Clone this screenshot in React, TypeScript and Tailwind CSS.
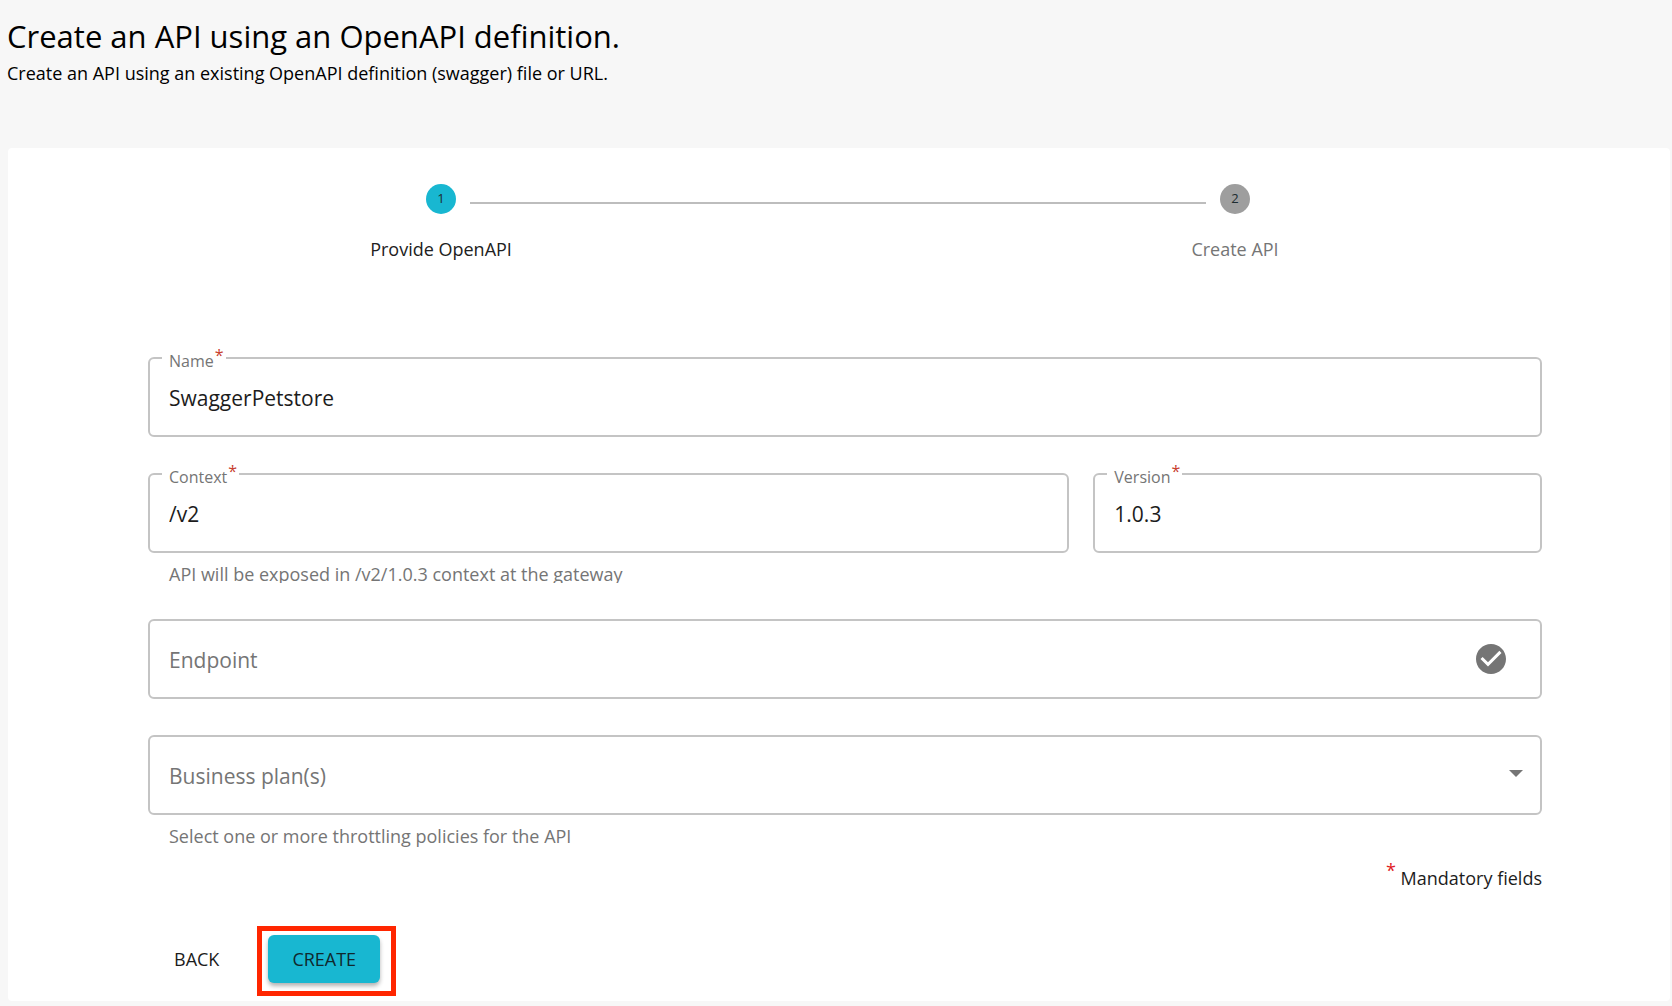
import React, { useId } from "react";

type FieldProps = {
  label: string;
  value: string;
};

function Asterisk() {
  return <span className="relative -top-1.5 ml-px text-[#c8402f]">*</span>;
}

const box =
  "block h-20 w-full rounded-md border-2 border-[#c4c4c4] bg-white px-[19px] text-[21px] outline-none";

function OutlinedField({ label, value }: FieldProps) {
  const id = useId();
  return (
    <div className="relative">
      <input id={id} required defaultValue={value} className={`${box} pt-0.5 text-[#1c1c1c]`} />
      <label
        htmlFor={id}
        className="absolute -top-2 left-3.5 bg-white pr-0.5 pl-[7px] text-base leading-6 text-[#757575]"
      >
        {label}
        <Asterisk />
      </label>
    </div>
  );
}

type StepProps = { index: number; label: string; active?: boolean };

function Step({ index, label, active }: StepProps) {
  return (
    <li className="flex flex-col items-center">
      <span
        className={`flex size-[30px] items-center justify-center rounded-full text-[13px] text-[#1c2c30] ${
          active ? "bg-[#18b7d1]" : "bg-[#9e9e9e]"
        }`}
      >
        {index}
      </span>
      <span
        className={`mt-[21px] text-lg leading-7 ${active ? "text-[#212121]" : "text-[#757575]"}`}
      >
        {label}
      </span>
    </li>
  );
}

export default function App() {
  return (
    <div className="min-h-screen bg-[#f7f7f7] pr-0.5 pb-1 pl-2 font-['Open_Sans',sans-serif] text-[#1c1c1c]">
      <header className="-ml-px h-[148px] pt-[15px] text-black">
        <h1 className="text-[31px] leading-[42px]">Create an API using an OpenAPI definition.</h1>
        <p className="text-lg leading-8">
          Create an API using an existing OpenAPI definition (swagger) file or URL.
        </p>
      </header>

      <main className="rounded-sm bg-white pt-9 pb-[5px]">
        <div className="relative mr-[38px] ml-9">
          <ol className="grid grid-cols-2">
            <Step index={1} label="Provide OpenAPI" active />
            <Step index={2} label="Create API" />
          </ol>
          <div className="absolute top-[18px] right-[calc(25%+29px)] left-[calc(25%+29px)] h-0.5 bg-[#bdbdbd]" />
        </div>

        <form
          className="mt-[94px] mr-32 ml-[140px]"
          onSubmit={(event) => event.preventDefault()}
        >
          <OutlinedField label="Name" value="SwaggerPetstore" />

          <div className="-mx-3 mt-9 flex">
            <div className="w-2/3 px-3">
              <OutlinedField label="Context" value="/v2" />
              <p className="h-[30px] overflow-hidden px-[21px] pt-[7px] text-lg leading-7 text-[#757575]">
                API will be exposed in /v2/1.0.3 context at the gateway
              </p>
            </div>
            <div className="w-1/3 px-3">
              <OutlinedField label="Version" value="1.0.3" />
            </div>
          </div>

          <div className="relative mt-9">
            <input
              aria-label="Endpoint"
              placeholder="Endpoint"
              className={`${box} pt-0.5 placeholder:text-[#757575]`}
            />
            <button
              type="button"
              aria-label="Check endpoint"
              className="absolute top-[22px] right-[33px]"
            >
              <svg viewBox="0 0 24 24" className="size-9 fill-[#757575]">
                <path d="M12 2C6.48 2 2 6.48 2 12s4.48 10 10 10 10-4.48 10-10S17.52 2 12 2zm-2 15l-5-5 1.41-1.41L10 14.17l7.59-7.59L19 8l-9 9z" />
              </svg>
            </button>
          </div>

          <div className="relative mt-9">
            <select
              aria-label="Business plan(s)"
              defaultValue=""
              className={`${box} appearance-none pt-1 text-[#757575]`}
            >
              <option value="">Business plan(s)</option>
            </select>
            <svg
              viewBox="0 0 14 7"
              className="pointer-events-none absolute top-[35px] right-[19px] h-[7px] w-3.5 fill-[#757575]"
            >
              <path d="M0 0h14L7 7z" />
            </svg>
          </div>
          <p className="px-[21px] pt-[7px] text-lg leading-7 text-[#757575]">
            Select one or more throttling policies for the API
          </p>

          <p className="mt-3.5 text-right text-lg leading-7">
            <span className="relative -top-2 text-[#e01b24]">*</span> Mandatory fields
          </p>

          <div className="mt-[34px] ml-2.5 flex items-start gap-[22px]">
            <button type="button" className="mt-[9px] px-4 py-2 text-lg leading-8">
              BACK
            </button>
            <div className="border-[5px] border-[#ff2600] pt-1 pr-[11px] pb-2 pl-1.5">
              <button
                type="submit"
                className="block h-12 rounded-md bg-[#18b7d1] px-6 text-lg text-[#10282d] shadow-[0_3px_4px_rgba(0,0,0,0.3)]"
              >
                CREATE
              </button>
            </div>
          </div>
        </form>
      </main>
    </div>
  );
}
